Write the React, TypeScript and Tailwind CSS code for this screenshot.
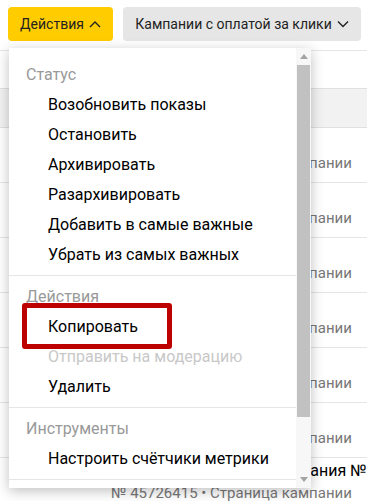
import React from "react";

const font = { fontFamily: 'Roboto, "Liberation Sans", Arial, sans-serif' };

type Item = { label: string; disabled?: boolean };
type Group = { title: string; items: Item[] };

const groups: Group[] = [
  {
    title: "Статус",
    items: [
      { label: "Возобновить показы" },
      { label: "Остановить" },
      { label: "Архивировать" },
      { label: "Разархивировать" },
      { label: "Добавить в самые важные" },
      { label: "Убрать из самых важных" },
    ],
  },
  {
    title: "Действия",
    items: [
      { label: "Копировать" },
      { label: "Отправить на модерацию", disabled: true },
      { label: "Удалить" },
    ],
  },
  {
    title: "Инструменты",
    items: [{ label: "Настроить счётчики метрики" }],
  },
];

const rows = [
  "Кампания 1",
  "Кампания 2",
  "Кампания 3",
  "Кампания 4",
  "Кампания 5",
  "Кампания 6",
  "Мастер кампаний 1 | Кампания № 7",
];

function Chevron({ up }: { up?: boolean }) {
  return (
    <svg width="12" height="8" viewBox="0 0 12 8" className="ml-[5px]">
      <polyline
        points={up ? "1,7 6,2 11,7" : "1,1.5 6,6.5 11,1.5"}
        fill="none"
        stroke="#222"
        strokeWidth="1.4"
      />
    </svg>
  );
}

export default function App() {
  return (
    <div className="relative h-[501px] w-[367px] overflow-hidden bg-white text-black" style={font}>
      {/* toolbar */}
      <div className="flex h-[50px] items-start gap-[10px] pl-[8px] pt-[7px]">
        <button className="flex h-[34px] w-[105px] shrink-0 items-center justify-center whitespace-nowrap rounded-[4px] bg-[#ffcc00] text-[14px] text-[#222]">
          Действия
          <Chevron up />
        </button>
        <button className="flex h-[34px] w-[238px] shrink-0 items-center justify-center whitespace-nowrap rounded-[4px] bg-[#e6e6e6] text-[14px] text-[#222]">
          Кампании с оплатой за клики
          <Chevron />
        </button>
      </div>

      {/* table behind */}
      <div className="border-t border-[#e5e5e5]">
        <div className="h-[37px]" />
        <div className="h-[40px] border-y border-[#e0e0e0] bg-[#f2f2f2]" />
        {rows.map((t) => (
          <div key={t} className="flex h-[55px] flex-col border-b border-[#e5e5e5] pl-[111px] pt-[2px]">
            <span className="whitespace-nowrap text-[16px] leading-[22px] text-black">{t}</span>
            <span className="whitespace-nowrap text-[15px] leading-[22px] text-[#777]">
              № 45726415 • Страница кампании
            </span>
          </div>
        ))}
      </div>

      {/* dropdown */}
      <div className="absolute left-[9px] top-[48px] flex h-[440px] w-[302px] bg-white shadow-[0_3px_12px_rgba(0,0,0,0.25)]">
        <div className="flex-1 overflow-hidden pt-[5px]">
          {groups.map((g, gi) => (
            <div
              key={g.title}
              className={
                gi === 0
                  ? "pb-[5px] pt-[7px] text-[16px]"
                  : "border-t border-[#e6e6e6] pb-[5px] pt-[6px] text-[16px]"
              }
            >
              <div className="flex h-[30px] items-center pl-[17px] text-[#999]">{g.title}</div>
              {g.items.map((it) => (
                <div
                  key={it.label}
                  className={
                    it.disabled
                      ? "flex h-[30px] items-center whitespace-nowrap pl-[39px] text-[#c8c8c8]"
                      : "flex h-[30px] items-center whitespace-nowrap pl-[39px] text-black"
                  }
                >
                  {it.label}
                </div>
              ))}
            </div>
          ))}
          <div className="border-t border-[#e6e6e6]" />
        </div>
        {/* scrollbar */}
        <div className="flex w-[15px] flex-col items-center bg-[#f7f7f7]">
          <div className="flex h-[17px] items-center justify-center">
            <svg width="8" height="5" viewBox="0 0 8 5">
              <polygon points="0,5 4,0 8,5" fill="#a3a3a3" />
            </svg>
          </div>
          <div className="h-[352px] w-[13px] bg-[#c1c1c1]" />
          <div className="flex-1" />
          <div className="flex h-[17px] items-center justify-center">
            <svg width="8" height="5" viewBox="0 0 8 5">
              <polygon points="0,0 8,0 4,5" fill="#a3a3a3" />
            </svg>
          </div>
        </div>
      </div>

      {/* highlight annotation */}
      <div className="absolute left-[22px] top-[303px] h-[46px] w-[150px] rounded-[3px] border-[5px] border-[#bd0000]" />
    </div>
  );
}
